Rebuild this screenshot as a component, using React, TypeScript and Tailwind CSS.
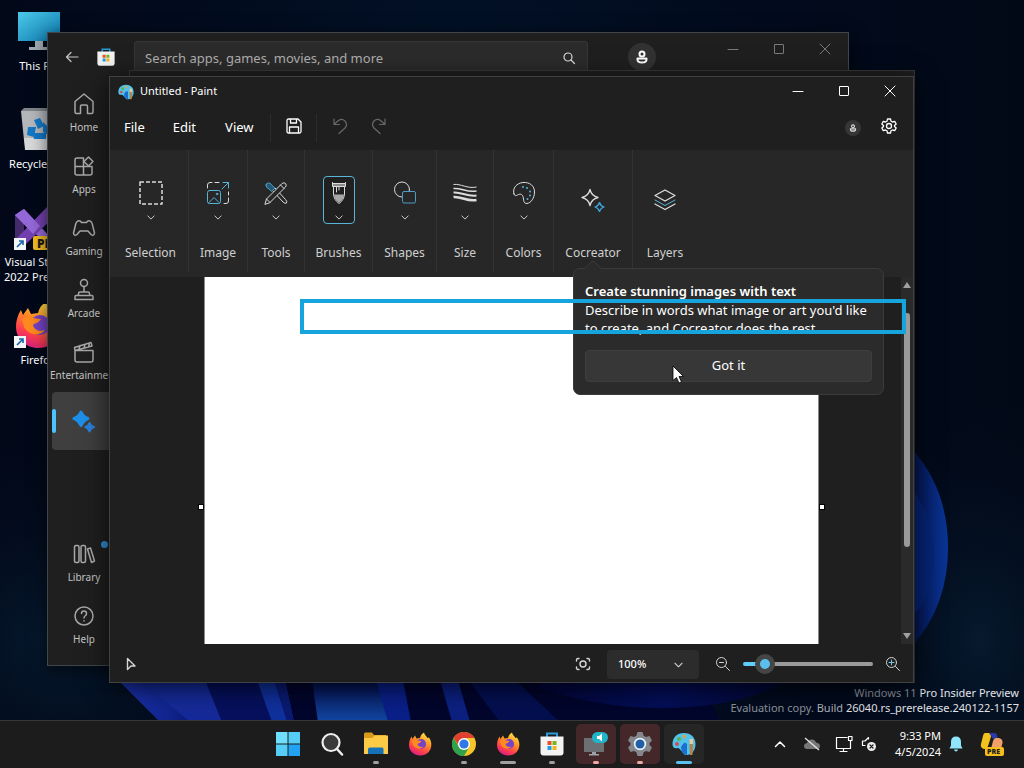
import React, { useState } from 'react';

type IconProps = { className?: string };

const stroke = {
  fill: 'none',
  stroke: 'currentColor',
  strokeLinecap: 'round' as const,
  strokeLinejoin: 'round' as const,
};

/* ---------- wallpaper ---------- */

function Wallpaper() {
  return (
    <svg className="absolute inset-0 h-full w-full" viewBox="0 0 1024 768" preserveAspectRatio="none" aria-hidden="true">
      <defs>
        <linearGradient id="sky" x1="0" y1="0" x2="1" y2="0">
          <stop offset="0" stopColor="#020818" />
          <stop offset="0.45" stopColor="#021026" />
          <stop offset="0.8" stopColor="#020a1c" />
          <stop offset="1" stopColor="#020916" />
        </linearGradient>
        <radialGradient id="glow">
          <stop offset="0" stopColor="#06192e" />
          <stop offset="1" stopColor="#020818" stopOpacity="0" />
        </radialGradient>
        <linearGradient id="petalA" x1="0" y1="0" x2="1" y2="0">
          <stop offset="0" stopColor="#1c33b0" />
          <stop offset="0.5" stopColor="#10248c" />
          <stop offset="1" stopColor="#020a4a" />
        </linearGradient>
        <linearGradient id="petalB" x1="0" y1="0" x2="0" y2="1">
          <stop offset="0" stopColor="#030c48" />
          <stop offset="1" stopColor="#1248a4" />
        </linearGradient>
        <linearGradient id="petalC" x1="0" y1="0" x2="1" y2="0">
          <stop offset="0" stopColor="#041450" />
          <stop offset="1" stopColor="#0a3698" />
        </linearGradient>
        <linearGradient id="petalD" x1="0" y1="0" x2="1" y2="0">
          <stop offset="0" stopColor="#02073a" />
          <stop offset="0.5" stopColor="#040e58" />
          <stop offset="1" stopColor="#020830" />
        </linearGradient>
      </defs>
      <rect width="1024" height="768" fill="url(#sky)" />
      <ellipse cx="60" cy="640" rx="260" ry="220" fill="url(#glow)" />
      <ellipse cx="980" cy="640" rx="180" ry="260" fill="url(#glow)" />
      <path d="M120 680 L160 722 H720 L700 680Z" fill="#02052c" />
      <path d="M118 680 L160 722 H225 L205 680Z" fill="url(#petalA)" />
      <path d="M135 680 Q165 700 190 722 H240 L205 680Z" fill="#152a98" />
      <path d="M205 680 H260 L272 722 H222Z" fill="#06105c" />
      <path d="M257 680 L272 722 H294 L285 680Z" fill="#10309c" />
      <path d="M274 680 L287 722 H294 L285 680Z" fill="#0a1a72" />
      <path d="M312 680 H378 L392 722 H318Z" fill="url(#petalB)" />
      <path d="M376 680 L388 722 H411 L403 680Z" fill="#0a1f88" />
      <path d="M440 680 L452 722 H470 L458 680Z" fill="#0c2080" />
      <path d="M468 680 H515 L560 722 H500Z" fill="#040f50" />
      <path d="M540 680 H790 Q740 708 660 708 Q600 708 540 688Z" fill="url(#petalD)" />
      <path d="M913 450 Q948 490 948 548 Q948 605 913 645Z" fill="url(#petalC)" />
      <path d="M913 490 Q934 520 934 555 Q934 595 913 615Z" fill="#062474" />
    </svg>
  );
}

/* ---------- desktop icons ---------- */

function ShortcutBadge() {
  return (
    <g>
      <rect x="0" y="32" width="12" height="12" fill="#f4f6f8" />
      <path d="M3 41 L9 35 M5 35 H9 V39" stroke="#1764a8" strokeWidth="1.6" fill="none" />
    </g>
  );
}

function ThisPcIcon() {
  return (
    <svg viewBox="0 0 48 48" className="h-12 w-12" aria-hidden="true">
      <defs>
        <linearGradient id="pc" x1="0" y1="0" x2="1" y2="1">
          <stop offset="0" stopColor="#4cc9ea" />
          <stop offset="1" stopColor="#0c77ac" />
        </linearGradient>
      </defs>
      <rect x="4" y="2" width="42" height="29" fill="url(#pc)" />
      <path d="M21 31 H29 V37 H35 V40 H15 V37 H21Z" fill="#a3acb3" />
    </svg>
  );
}

function RecycleIcon() {
  return (
    <svg viewBox="0 0 48 48" className="h-12 w-12" aria-hidden="true">
      <path d="M7 3 H43 L39 42 H11Z" fill="#b4b8bb" />
      <path d="M7 3 L10 0 H40 L43 3Z" fill="#7f8589" />
      <path d="M11 38 L10 30 L40 30 L39 42 H11Z" fill="#d6d8da" />
      <g fill="#1378c8">
        <path d="M20 12 L26 10 L30 18 L24 21Z" />
        <path d="M14 19 L22 19 L20 29 L13 27Z" />
        <path d="M19 25 H32 V31 H20Z" />
        <path d="M29 14 L36 21 L34 27 L29 24Z" />
      </g>
    </svg>
  );
}

function VisualStudioIcon() {
  return (
    <svg viewBox="0 0 48 48" className="h-12 w-12" aria-hidden="true">
      <path d="M1 9 L10 3 V40 L1 34Z" fill="#44296b" />
      <path d="M1 9 L10 3 L38 33 V43Z" fill="#9468d8" />
      <path d="M10 40 L1 34 L34 0 L46 5Z" fill="#7340b0" />
      <path d="M1 9 L10 3 L26 20 L19 28Z" fill="#9468d8" />
      <path d="M34 0 L46 5 V37 L34 43Z" fill="#b98cf0" />
      <rect x="19" y="30" width="29" height="14" rx="2" fill="#f2bd23" />
      <text x="23" y="42" fontSize="12" fontWeight="800" fontFamily="Open Sans, sans-serif" fill="#1a1a1a">PRE</text>
      <ShortcutBadge />
    </svg>
  );
}

function FirefoxArt({ id }: { id: string }) {
  return (
    <g>
      <defs>
        <linearGradient id={id} x1="0.8" y1="0" x2="0.3" y2="1">
          <stop offset="0" stopColor="#fff04a" />
          <stop offset="0.4" stopColor="#ff9422" />
          <stop offset="0.75" stopColor="#ff3d50" />
          <stop offset="1" stopColor="#d21d84" />
        </linearGradient>
      </defs>
      <path
        d="M1 13 C1 9 2.500 6 3.500 4.500 L4.500 7 L7 3.500 L8.500 6.500 L12 6 C12.500 4 13.500 2 16 0.500 C16.500 3 18.500 4 19.500 6 L21 5.500 C23.500 9 24 13 22.500 17 C20.500 21.500 16.500 23.500 12 23.500 C6 23.500 1 19 1 13Z"
        fill={`url(#${id})`}
      />
      <circle cx="13" cy="12" r="5" fill="#7542c8" />
      <path d="M4 9 C7 7 10 9 13.500 9 C12.500 11 10.500 11 9.500 12 C10 14.500 13 15.500 15.500 14.500 C13 18 7 17 5 13Z" fill="#ff8a20" />
    </g>
  );
}

function FirefoxDesktopIcon() {
  return (
    <svg viewBox="0 0 48 48" className="h-12 w-12" aria-hidden="true">
      <g transform="translate(0 -3) scale(2)">
        <FirefoxArt id="ffDesk" />
      </g>
      <ShortcutBadge />
    </svg>
  );
}

const desktopItems = [
  { label: 'This PC', icon: <ThisPcIcon /> },
  { label: 'Recycle Bin', icon: <RecycleIcon /> },
  { label: 'Visual Studio 2022 Preview', icon: <VisualStudioIcon /> },
  { label: 'Firefox', icon: <FirefoxDesktopIcon /> },
];

function DesktopIcons() {
  return (
    <div className="relative flex w-[76px] flex-col pt-[10px]">
      {desktopItems.map((item) => (
        <button key={item.label} className="flex h-[98px] flex-col items-center text-center text-[11px] leading-[15px] text-white">
          {item.icon}
          <span className="w-[76px]">{item.label}</span>
        </button>
      ))}
    </div>
  );
}

/* ---------- window buttons ---------- */

function WindowButtons({ className }: { className: string }) {
  return (
    <div className={`flex ${className}`}>
      <button aria-label="Minimize" className="flex h-full w-[46px] items-center justify-center">
        <svg viewBox="0 0 12 12" className="h-3 w-3" {...stroke}><path d="M1 6.500 H11" /></svg>
      </button>
      <button aria-label="Maximize" className="flex h-full w-[46px] items-center justify-center">
        <svg viewBox="0 0 12 12" className="h-3 w-3" {...stroke}><rect x="1.500" y="1.500" width="9" height="9" rx="0.500" /></svg>
      </button>
      <button aria-label="Close" className="flex h-full w-[46px] items-center justify-center">
        <svg viewBox="0 0 12 12" className="h-3 w-3" {...stroke}><path d="M1 1 L11 11 M11 1 L1 11" /></svg>
      </button>
    </div>
  );
}

function PersonIcon({ className }: IconProps) {
  return (
    <svg viewBox="0 0 14 14" className={className} {...stroke} strokeWidth="2" aria-hidden="true">
      <circle cx="7" cy="4" r="2.500" />
      <path d="M2.500 8.500 H11.500 V9.500 C11.500 11.500 9.500 12.500 7 12.500 C4.500 12.500 2.500 11.500 2.500 9.500Z" />
    </svg>
  );
}

/* ---------- Microsoft Store ---------- */

function StoreLogo({ className }: IconProps) {
  return (
    <svg viewBox="0 0 24 24" className={className} aria-hidden="true">
      <path d="M7 6 V1.500 H17 V6" fill="none" stroke="#2a9bd8" strokeWidth="2" />
      <path d="M0.500 4.500 H23.500 V20.500 Q23.500 23.500 20.500 23.500 H3.500 Q0.500 23.500 0.500 20.500Z" fill="#f3f3f3" />
      <rect x="7.500" y="9" width="4" height="4" fill="#e8502a" />
      <rect x="12.500" y="9" width="4" height="4" fill="#7ab51d" />
      <rect x="7.500" y="14" width="4" height="4" fill="#1f9de0" />
      <rect x="12.500" y="14" width="4" height="4" fill="#f6b51a" />
    </svg>
  );
}

const storeIcons: Record<string, React.ReactNode> = {
  Home: <path d="M3 9.500 L12 2 L21 9.500 V20 Q21 21.500 19.500 21.500 H15.500 V14.500 Q15.500 13 14 13 H10 Q8.500 13 8.500 14.500 V21.500 H4.500 Q3 21.500 3 20Z" />,
  Apps: (
    <>
      <path d="M11.500 4 H5 Q3 4 3 6 V19 Q3 21 5 21 H18 Q20 21 20 19 V12.500 H3 M11.500 4 V21" />
      <path d="M16.500 3 L21 7.500 L16.500 12 L12 7.500Z" />
    </>
  ),
  Gaming: <path d="M6 5 Q8 4 9.500 6.500 H14.500 Q16 4 18 5 Q20 5.500 21 11 L22.500 17 Q22 20.500 19 18.500 L16 15 H8 L5 18.500 Q2 20.500 1.500 17 L3 11 Q4 5.500 6 5Z" />,
  Arcade: (
    <>
      <circle cx="12" cy="5" r="3.500" />
      <path d="M12 8.500 V14 M6.500 17.500 V15.500 Q6.500 14 8 14 H16 Q17.500 14 17.500 15.500 V17.500 M4 17.500 H20 Q21 17.500 21 19 V21.500 H3 V19 Q3 17.500 4 17.500Z" />
    </>
  ),
  Entertainment: <path d="M3 10.500 H21 V20 Q21 22 19 22 H5 Q3 22 3 20Z M3 10.500 L2.500 7.500 L19 2.500 L20 6 L3 10.500 M8 5.500 L7 9 M13 4.500 L12 8 M17.500 3 L16.500 7" />,
  Library: (
    <>
      <rect x="2.500" y="3.500" width="4.500" height="17" rx="1.500" />
      <rect x="9" y="3.500" width="4.500" height="17" rx="1.500" />
      <path d="M15.500 7 L18.500 6 L22.500 19 L19.500 20.500Z" />
    </>
  ),
  Help: (
    <>
      <circle cx="12" cy="12" r="9" />
      <path d="M9.500 9.500 Q9.500 7 12 7 Q14.500 7 14.500 9.500 Q14.500 11 13.500 11.500 Q12 12.500 12 14 M12 16.800 V17" />
    </>
  ),
};

function StoreNavItem({ name, dot }: { name: string; dot?: boolean }) {
  return (
    <button className="relative flex h-[62px] w-[72px] flex-col items-center gap-1 pt-[6px] text-[10px] leading-[14px] text-[#c4c4c4]">
      <svg viewBox="0 0 24 24" className="h-6 w-6 text-[#a8a8a8]" {...stroke} strokeWidth="1.500" aria-hidden="true">
        {storeIcons[name]}
      </svg>
      <span>{name}</span>
      {dot && <span className="absolute top-[5px] right-[12px] h-[7px] w-[7px] rounded-full bg-[#2f8fd8]" />}
    </button>
  );
}

function StoreWindow() {
  return (
    <section aria-label="Microsoft Store" className="absolute top-8 right-[175px] bottom-[54px] left-[47px] flex flex-col overflow-hidden border border-[#41464b] bg-[#1f1f1f] shadow-[0_4px_16px_rgba(0,0,0,0.6)]">
      <header className="flex h-[53px] items-start">
        <div className="flex h-12 w-[86px] shrink-0 items-center justify-between pr-[19px] pl-[17px]">
          <button aria-label="Back" className="text-[#c8c8c8]">
            <svg viewBox="0 0 14 14" className="h-[14px] w-[14px]" {...stroke} strokeWidth="1.200"><path d="M13 7 H1.500 M6 2.500 L1.500 7 L6 11.500" /></svg>
          </button>
          <StoreLogo className="h-[18px] w-[18px]" />
        </div>
        <div className="relative mt-2 min-w-0 flex-1">
          <input
            type="text"
            aria-label="Search the Store"
            placeholder="Search apps, games, movies, and more"
            className="h-[34px] w-full rounded-[3px] border border-[#363636] bg-[#2b2b2b] pr-9 pl-[10px] text-[13px] text-white placeholder:text-[#b0b0b0]"
          />
          <svg viewBox="0 0 14 14" className="absolute top-[10px] right-3 h-[14px] w-[14px] text-[#dadada]" {...stroke} strokeWidth="1.200">
            <circle cx="6" cy="6" r="4" /><path d="M9 9 L12.500 12.500" />
          </svg>
        </div>
        <button aria-label="Account" className="mt-[10px] ml-10 flex h-7 w-7 items-center justify-center rounded-full bg-[#323232] text-white">
          <PersonIcon className="h-[14px] w-[14px]" />
        </button>
        <WindowButtons className="ml-[54px] h-8 text-[#7a7a7a]" />
      </header>
      <nav className="flex flex-1 flex-col pb-[5px]">
        {['Home', 'Apps', 'Gaming', 'Arcade', 'Entertainment'].map((name) => (
          <StoreNavItem key={name} name={name} />
        ))}
        <button aria-label="AI Hub" className="mt-[-4px] ml-1 flex h-[58px] w-16 items-center rounded-[4px] bg-[#3f3f3f]">
          <span className="h-6 w-1 rounded-full bg-[#4cc2ff]" />
          <svg viewBox="0 0 24 24" className="ml-4 h-6 w-6" aria-hidden="true">
            <path d="M9 3 Q11 7.500 16 9.500 Q11 11.500 9 16.500 Q7 11.500 2 9.500 Q7 7.500 9 3Z" fill="#1e8fe8" stroke="#1e8fe8" strokeWidth="3" strokeLinejoin="round" />
            <path d="M17.500 14 Q18.500 17 22 18 Q18.500 19 17.500 22.500 Q16.500 19 13.500 18 Q16.500 17 17.500 14Z" fill="#2880dc" stroke="#2880dc" strokeWidth="2" strokeLinejoin="round" />
          </svg>
        </button>
        <div className="mt-auto flex flex-col">
          <StoreNavItem name="Library" dot />
          <StoreNavItem name="Help" />
        </div>
      </nav>
    </section>
  );
}

/* ---------- Paint ---------- */

function PaintLogo({ className }: IconProps) {
  return (
    <svg viewBox="0 0 24 24" className={className} aria-hidden="true">
      <path d="M12 1 C19 1 23.500 5.500 23.500 12 C23.500 19 19 23 15 23 C11.500 23 11.500 21 9.500 19 C8 17.500 7.500 16 5.500 16 C2 17 0.500 15 0.500 12 C0.500 5.500 5 1 12 1Z" fill="#4fc3ea" />
      <path d="M11 12 L13 10.500 L15 12 V23 Q11.500 22.500 10 19.500 Q9 17 9 15Z" fill="#1b6fd0" />
      <circle cx="5" cy="12" r="2" fill="#d9475a" />
      <circle cx="7" cy="7" r="2" fill="#5fae4a" />
      <circle cx="12.500" cy="4.500" r="2" fill="#c9a860" />
      <path d="M17.500 8 H21 V16 L20.500 23 H18 L17.500 16Z" fill="#b5804c" />
      <path d="M17.500 7 H21 V12 H17.500Z" fill="#e8c9a0" />
    </svg>
  );
}

function Divider() {
  return <span className="h-7 w-px bg-[#2c2c2c]" />;
}

const ribbonIcons: Record<string, React.ReactNode> = {
  Selection: <rect x="1" y="1" width="22" height="22" strokeDasharray="4 2" strokeLinecap="butt" strokeWidth="1.500" />,
  Image: (
    <>
      <path d="M1.500 7 V4 Q1.500 1.500 4 1.500 H6 M9 1.500 H13 M22.500 11 V14 M22.500 17 V20 Q22.500 22.500 20 22.500 H18" />
      <g stroke="#58b4d8">
        <path d="M16 8 L22.500 1.500 M17 1.500 H22.500 V7" />
        <rect x="1.500" y="9.500" width="13" height="13" rx="2" />
        <path d="M3 21.500 L8 16.500 L13 21.500" />
        <circle cx="11" cy="13" r="0.800" />
      </g>
    </>
  ),
  Tools: (
    <>
      <path d="M8 9 L19 21 Q21 23 22.500 22 Q23.500 20.500 21.500 18.500 L11 7" />
      <path d="M1 23 L2.500 18 L18 2.500 Q20 1 21.500 2.500 Q23 4 21.500 6 L6 21.500Z" fill="#272727" />
      <path d="M16.500 4 L20 7.500 M2.500 18 L6 21.500" />
      <path d="M2 4 Q2 2 4.500 2 Q7 2 8 4.500 L11 7 L7.500 10.500 L5 8 Q2 7 2 4Z" stroke="#4d9cc4" fill="#245a78" />
    </>
  ),
  Brushes: (
    <>
      <path d="M6.500 6 V13 Q7 19 12 22.500 Q17 19 17.500 13 V6" />
      <path d="M5.500 1.500 V5.500 H18.500 V1.500 M5.500 2.500 H18.500" />
      <path d="M6 3 H18 V5 H6Z" fill="#8c8c8c" stroke="none" />
      <path d="M7 13.500 H17 Q16.500 18.500 12 21.500 Q7.500 18.500 7 13.500Z" fill="#a8a8a8" stroke="none" />
      <path d="M9.500 6 V11 M12 6 V9" />
    </>
  ),
  Shapes: (
    <>
      <circle cx="9" cy="8.500" r="7.500" />
      <rect x="9.500" y="10.500" width="13" height="11.500" rx="1.500" fill="#272727" stroke="#4d9cc4" />
    </>
  ),
  Size: (
    <g fill="none" strokeLinecap="butt">
      <path d="M0.500 3.500 C8 2.500 14 8 23.500 6" strokeWidth="1" />
      <path d="M0.500 7.500 C8 6.500 14 12 23.500 10" strokeWidth="1.500" />
      <path d="M0.500 11.500 C8 10.500 14 16 23.500 14.500" strokeWidth="2" />
      <path d="M0.500 16 C8 15 14 21 23.500 19" strokeWidth="2.500" />
    </g>
  ),
  Colors: (
    <>
      <path d="M2 13 C0 7 5 2 11 1.500 C18 1 22.500 5 22.500 11 C22.500 17 19 22 15 22.500 C11 22.500 12 19 11 15.500 C10 13 8 12.500 5.500 14 C4 15 2.500 15 2 13Z" />
      <g fill="#58b4d8" stroke="none">
        <circle cx="11" cy="6" r="1" /><circle cx="15" cy="7" r="1" /><circle cx="18" cy="10.500" r="1" />
        <circle cx="18" cy="14.500" r="1" /><circle cx="15.500" cy="18" r="1" />
      </g>
    </>
  ),
  Cocreator: (
    <>
      <path d="M9 1.500 Q10.500 8 17 9.500 Q10.500 11 9 17.500 Q7.500 11 1 9.500 Q7.500 8 9 1.500Z" strokeWidth="1.300" />
      <path d="M18.500 14.500 Q19.500 18 23 19 Q19.500 20 18.500 23.500 Q17.500 20 14 19 Q17.500 18 18.500 14.500Z" stroke="#3fa4dc" strokeWidth="1.300" />
    </>
  ),
  Layers: (
    <>
      <path d="M12 2 L22 7.500 L12 13 L2 7.500Z" strokeWidth="1.300" />
      <path d="M2 12 L12 17.500 L22 12" stroke="#58b4d8" />
      <path d="M2 16 L12 21.500 L22 16" strokeWidth="1.300" />
    </>
  ),
};

function Chevron({ className }: IconProps) {
  return (
    <svg viewBox="0 0 10 6" className={className} {...stroke} strokeWidth="1.200" aria-hidden="true"><path d="M1 1 L5 5 L9 1" /></svg>
  );
}

const ribbonGroups = [
  { name: 'Selection', width: 'w-[79px] pl-[3px]', menu: true },
  { name: 'Image', width: 'w-[59px]', menu: true },
  { name: 'Tools', width: 'w-[57px]', menu: true },
  { name: 'Brushes', width: 'w-[68px]', menu: true, active: true },
  { name: 'Shapes', width: 'w-[64px]', menu: true },
  { name: 'Size', width: 'w-[57px]', menu: true },
  { name: 'Colors', width: 'w-[60px]', menu: true },
  { name: 'Cocreator', width: 'w-[79px]' },
  { name: 'Layers', width: 'w-16', last: true },
];

function Ribbon() {
  return (
    <div className="flex h-[127px] shrink-0 bg-[#272727]">
      {ribbonGroups.map((g) => (
        <button
          key={g.name}
          className={`flex h-[122px] shrink-0 flex-col items-center pt-[26px] text-[12px] leading-4 text-[#cfcfcf] ${g.width} ${g.last ? '' : 'border-r border-[#323232]'}`}
        >
          <span className={`flex h-12 w-8 flex-col items-center justify-center gap-[10px] rounded-[4px] ${g.active ? 'border border-[#58b4d8] bg-[#202020]' : ''}`}>
            <svg viewBox="0 0 24 24" className="h-6 w-6 shrink-0 text-[#dcdcdc]" {...stroke} aria-hidden="true">{ribbonIcons[g.name]}</svg>
            {g.menu && <Chevron className="h-[5px] w-2 text-[#d0d0d0]" />}
          </span>
          <span className="mt-[21px]">{g.name}</span>
        </button>
      ))}
    </div>
  );
}

function CocreatorTip({ onClose }: { onClose: () => void }) {
  return (
    <div role="dialog" aria-label="Create stunning images with text" className="absolute top-[191px] left-[463px] w-[311px] rounded-[7px] border border-[#3b3b3b] bg-[#2b2b2b] px-[11px] py-3 text-white">
      <svg viewBox="0 0 18 9" className="absolute top-[-8px] left-[10px] h-[9px] w-[18px]" aria-hidden="true">
        <path d="M0 8 L8 0.500 H10 L18 8 V9 H0Z" fill="#2b2b2b" />
        <path d="M0 8 L8 0.500 H10 L18 8" fill="none" stroke="#3b3b3b" />
      </svg>
      <h2 className="text-[13px] leading-5 font-semibold">Create stunning images with text</h2>
      <p className="h-[49px] text-[13px] leading-[18px]">Describe in words what image or art you'd like to create, and Cocreator does the rest.</p>
      <button onClick={onClose} className="h-8 w-full rounded-[4px] border border-[#3e3e3e] bg-[#373737] text-[13px]">Got it</button>
    </div>
  );
}

function Handle({ className }: { className: string }) {
  return <span className={`absolute top-[227px] h-[6px] w-[6px] border border-black bg-white ${className}`} />;
}

function CanvasArea() {
  return (
    <div className="flex min-h-0 flex-1">
      <div className="relative w-[94px] shrink-0"><Handle className="right-0" /></div>
      <div className="flex-1 border-x border-[#8a8a8a] bg-white" />
      <div className="relative flex w-[94px] shrink-0 justify-end">
        <Handle className="left-0" />
        <div className="flex w-3 flex-col items-center justify-between bg-[#2a2a2a] py-[5px]">
          <svg viewBox="0 0 8 6" className="h-[6px] w-2" aria-hidden="true"><path d="M4 0 L8 6 H0Z" fill="#a0a0a0" /></svg>
          <span className="mt-[25px] mb-auto h-[234px] w-[6px] rounded-full bg-[#9a9a9a]" />
          <svg viewBox="0 0 8 6" className="h-[6px] w-2" aria-hidden="true"><path d="M0 0 H8 L4 6Z" fill="#a0a0a0" /></svg>
        </div>
      </div>
    </div>
  );
}

function StatusBar() {
  const [zoom, setZoom] = useState(11);

  return (
    <footer className="flex h-[38px] shrink-0 items-center pt-[2px] text-[#d6d6d6]">
      <svg viewBox="0 0 10 14" className="ml-4 h-[14px] w-[10px]" {...stroke} strokeWidth="1.400" aria-hidden="true"><path d="M1.500 1.500 L9 9 H5 L1.500 12.500Z" /></svg>
      <button aria-label="Fit to window" className="mr-4 ml-auto">
        <svg viewBox="0 0 16 16" className="h-4 w-4" {...stroke} strokeWidth="1.400">
          <circle cx="8" cy="8" r="3" />
          <path d="M1.500 5 V4 Q1.500 2.500 3 2.500 H4 M12 2.500 H13 Q14.500 2.500 14.500 4 V5 M14.500 11 V12 Q14.500 13.500 13 13.500 H12 M4 13.500 H3 Q1.500 13.500 1.500 12 V11" />
        </svg>
      </button>
      <div className="relative">
        <select aria-label="Zoom level" defaultValue="100%" className="block h-[29px] w-[92px] appearance-none rounded-[4px] bg-[#2c2c2c] pl-[11px] text-[11px] font-medium text-white">
          <option>50%</option>
          <option>100%</option>
          <option>200%</option>
        </select>
        <Chevron className="pointer-events-none absolute top-3 right-4 h-[6px] w-[9px]" />
      </div>
      <button aria-label="Zoom out" className="ml-4">
        <svg viewBox="0 0 16 16" className="h-4 w-4" {...stroke}><circle cx="6.500" cy="6.500" r="5" /><path d="M10.500 10.500 L14.500 14.500 M4.500 6.500 H8.500" /></svg>
      </button>
      <input
        type="range"
        aria-label="Zoom"
        min="0"
        max="100"
        value={zoom}
        onChange={(e) => setZoom(Number(e.target.value))}
        className="mx-3 h-5 w-[130px] appearance-none bg-transparent [&::-webkit-slider-runnable-track]:h-1 [&::-webkit-slider-runnable-track]:rounded-full [&::-webkit-slider-runnable-track]:bg-[linear-gradient(90deg,#60cdff_16%,#9a9a9a_16%)] [&::-webkit-slider-thumb]:mt-[-8px] [&::-webkit-slider-thumb]:h-5 [&::-webkit-slider-thumb]:w-5 [&::-webkit-slider-thumb]:appearance-none [&::-webkit-slider-thumb]:rounded-full [&::-webkit-slider-thumb]:border-[5px] [&::-webkit-slider-thumb]:border-[#454545] [&::-webkit-slider-thumb]:bg-[#5bbfee]"
      />
      <button aria-label="Zoom in" className="mr-3">
        <svg viewBox="0 0 16 16" className="h-4 w-4" {...stroke}><circle cx="6.500" cy="6.500" r="5" /><path d="M10.500 10.500 L14.500 14.500" /><path d="M4 6.500 H9 M6.500 4 V9" stroke="#78c8e8" /></svg>
      </button>
    </footer>
  );
}

function PaintWindow() {
  const [tipOpen, setTipOpen] = useState(true);

  return (
    <section aria-label="Paint" className="absolute top-[76px] right-[110px] bottom-[37px] left-[109px] flex flex-col border border-[#414141] bg-[#1f1f1f] shadow-[0_4px_24px_rgba(0,0,0,0.7)]">
      <header className="flex h-[29px] shrink-0 items-center">
        <PaintLogo className="ml-2 h-4 w-4" />
        <h1 className="ml-[6px] text-[11px] text-white">Untitled - Paint</h1>
        <WindowButtons className="ml-auto h-7 self-start text-white" />
      </header>
      <div className="flex h-11 shrink-0 items-center text-[13px] text-white">
        <button className="ml-[14px]">File</button>
        <button className="ml-7">Edit</button>
        <button className="mr-4 ml-[29px]">View</button>
        <Divider />
        <button aria-label="Save" className="mr-[14px] ml-[15px] pb-1">
          <svg viewBox="0 0 16 16" className="h-4 w-4" {...stroke} strokeWidth="1.300">
            <path d="M1 2.500 Q1 1 2.500 1 H12 L15 4 V13.500 Q15 15 13.500 15 H2.500 Q1 15 1 13.500Z M4.500 1 V5 H10.500 V1 M3.500 15 V9 H12.500 V15" />
          </svg>
        </button>
        <Divider />
        <button aria-label="Undo" className="ml-[15px] pb-1 text-[#686868]">
          <svg viewBox="0 0 16 18" className="h-[18px] w-4" {...stroke} strokeWidth="1.200"><path d="M2 2 V7.500 H7.500 M2.500 7 L6.500 3.500 Q10 1 13 4 Q16 7.500 13 11 L7 16.500" /></svg>
        </button>
        <button aria-label="Redo" className="ml-[23px] pb-1 text-[#686868]">
          <svg viewBox="0 0 16 18" className="h-[18px] w-4" {...stroke} strokeWidth="1.200"><path d="M14 2 V7.500 H8.500 M13.500 7 L9.500 3.500 Q6 1 3 4 Q0 7.500 3 11 L9 16.500" /></svg>
        </button>
        <button aria-label="Account" className="mr-5 ml-auto flex h-4 w-4 items-center justify-center rounded-full bg-[#363636] text-[#dcdcdc]">
          <PersonIcon className="h-2 w-2" />
        </button>
        <button aria-label="Settings" className="mr-4 pb-1">
          <svg viewBox="0 0 16 16" className="h-4 w-4" {...stroke} strokeWidth="1.300">
            <circle cx="8" cy="8" r="2.500" />
            <path d="M6.500 1 H9.500 L10 3.200 L11.500 4 L13.700 3.400 L15.200 6 L13.500 7.500 V8.500 L15.200 10 L13.700 12.600 L11.500 12 L10 12.800 L9.500 15 H6.500 L6 12.800 L4.500 12 L2.300 12.600 L0.800 10 L2.500 8.500 V7.500 L0.800 6 L2.300 3.400 L4.500 4 L6 3.200Z" />
          </svg>
        </button>
      </div>
      <Ribbon />
      <CanvasArea />
      <StatusBar />
      {tipOpen && <CocreatorTip onClose={() => setTipOpen(false)} />}
      <div className="pointer-events-none absolute top-[222px] left-[190px] h-[35px] w-[606px] border-[4px] border-[#15a5dc]" />
      <svg viewBox="0 0 12 19" className="pointer-events-none absolute top-[288px] left-[562px] h-[19px] w-3" aria-hidden="true">
        <path d="M1 1 V15.500 L4.500 12.500 L7 18 L9.500 17 L7 11.500 H11.500Z" fill="#fff" stroke="#000" strokeWidth="0.800" />
      </svg>
    </section>
  );
}

/* ---------- taskbar ---------- */

const taskbarApps = [
  {
    name: 'Start',
    icon: (
      <g fill="#55cdf6">
        <rect x="0" y="0" width="11.500" height="11.500" fill="#6fe0fb" /><rect x="12.500" y="0" width="11.500" height="11.500" />
        <rect x="0" y="12.500" width="11.500" height="11.500" /><rect x="12.500" y="12.500" width="11.500" height="11.500" fill="#22a2f2" />
      </g>
    ),
  },
  {
    name: 'Search',
    icon: (
      <g>
        <circle cx="11" cy="10.500" r="8.500" fill="#3a3a3a" stroke="#eee" strokeWidth="2.200" />
        <path d="M17 17 L22 22.500" stroke="#eee" strokeWidth="2.500" strokeLinecap="round" />
      </g>
    ),
  },
  {
    name: 'File Explorer',
    mark: 'w-[6px] bg-[#a0a0a0]',
    icon: (
      <g>
        <path d="M0 2 Q0 0.500 1.500 0.500 H8 L10 3 H22 V8 H0Z" fill="#d99a1c" />
        <path d="M0 6 H8 L11 3.500 H24 V22 H0Z" fill="#fbcb45" />
        <path d="M4 22 V17 Q4 15.500 6 15.500 H18 Q19.500 15.500 19.500 17 V22Z" fill="#1672b8" />
      </g>
    ),
  },
  { name: 'Firefox', icon: <FirefoxArt id="ffOne" /> },
  {
    name: 'Chrome',
    mark: 'w-[6px] bg-[#a0a0a0]',
    icon: (
      <g>
        <circle cx="12" cy="12" r="12" fill="#f6c528" />
        <path d="M1.600 6 A12 12 0 0 1 22.400 6 H12 L7 14Z" fill="#e0402f" />
        <path d="M1.600 6 A12 12 0 0 0 12 24 L17.200 15 L12 18 L7 15Z" fill="#2ea24c" />
        <circle cx="12" cy="12" r="6" fill="#fff" />
        <circle cx="12" cy="12" r="4.600" fill="#2f78e8" />
      </g>
    ),
  },
  { name: 'Firefox Nightly', mark: 'w-4 bg-[#a0a0a0]', icon: <FirefoxArt id="ffTwo" /> },
  { name: 'Microsoft Store', mark: 'w-[6px] bg-[#a0a0a0]', icon: <StoreLogo /> },
  {
    name: 'Audio',
    tile: 'bg-[#432729]',
    mark: 'w-[6px] bg-[#f0a8a4]',
    icon: (
      <g>
        <rect x="0" y="6" width="20" height="14" fill="#6c7074" />
        <path d="M8 20 H12 V22 H15 V23.500 H5 V22 H8Z" fill="#9ba2aa" />
        <rect x="8" y="0" width="16" height="11" rx="5.500" fill="#1fb4c8" />
        <path d="M13 4 H15 L18 1.500 V9.500 L15 7 H13Z" fill="#fff" />
      </g>
    ),
  },
  {
    name: 'Settings',
    tile: 'bg-[#432729]',
    mark: 'w-[6px] bg-[#f0a8a4]',
    icon: (
      <g>
        <path d="M9.500 0 H14.500 L15.500 3.500 L18 5 L21.500 4 L24 8.500 L21.500 11 V13 L24 15.500 L21.500 20 L18 19 L15.500 20.500 L14.500 24 H9.500 L8.500 20.500 L6 19 L2.500 20 L0 15.500 L2.500 13 V11 L0 8.500 L2.500 4 L6 5 L8.500 3.500Z" fill="#82878c" />
        <circle cx="12" cy="12" r="6.200" fill="#eef2f6" />
        <circle cx="12" cy="12" r="4.500" fill="#1e5fa8" />
      </g>
    ),
  },
  { name: 'Paint', tile: 'bg-[#262626]', mark: 'w-4 bg-[#5bc0ee]', icon: <PaintLogo /> },
];

function Taskbar() {
  return (
    <footer className="relative flex h-12 shrink-0 items-center border-t border-[#36393c] bg-[#1c1c1c] pb-[2px] text-white">
      <div className="mr-[62px] ml-auto flex h-full items-center">
        {taskbarApps.map((app) => (
          <button key={app.name} aria-label={app.name} className="flex h-full w-11 items-center justify-center">
            <span className={`relative flex h-10 w-10 items-center justify-center rounded-[5px] ${app.tile ?? ''}`}>
              <svg viewBox="0 0 24 24" className="h-6 w-6">{app.icon}</svg>
              {app.mark && <span className={`absolute bottom-0 h-[3px] rounded-full ${app.mark}`} />}
            </span>
          </button>
        ))}
      </div>
      <div className="flex w-[256px] items-center">
        <button aria-label="Show hidden icons" className="ml-[2px] flex w-5 justify-center">
          <svg viewBox="0 0 12 8" className="h-2 w-3" {...stroke} strokeWidth="1.500"><path d="M1.500 6.500 L6 2 L10.500 6.500" /></svg>
        </button>
        <svg viewBox="0 0 18 16" className="ml-[13px] h-4 w-[18px]" aria-hidden="true">
          <path d="M4 13 Q1 13 1 10 Q1 7.500 4 7 Q5.500 3 9 3.500 Q12 3.500 13 6.500 Q17 7 17 10 Q17 13 14 13Z" fill="#777" />
          <path d="M2 2 L16 14" stroke="#e2e2e2" strokeWidth="1.400" />
        </svg>
        <button aria-label="Network and volume" className="ml-[14px] flex items-center gap-2">
          <svg viewBox="0 0 18 18" className="h-[18px] w-[18px]" {...stroke} strokeWidth="1.200">
            <path d="M12 2.500 H1.500 V13.500 H15.500 V8 M5 16.500 H12 M8.500 13.500 V16.500 M13.500 1.500 H17 V5.500 H13.500Z M15.500 5.500 V8" />
          </svg>
          <svg viewBox="0 0 16 16" className="h-4 w-4" {...stroke} strokeWidth="1.200">
            <path d="M7.500 3 V1.500 L4 5 H1.500 V9.500 H4" />
            <circle cx="10.500" cy="10.500" r="4.500" fill="#eee" stroke="none" />
            <path d="M9 9 L12 12 M12 9 L9 12" stroke="#1c1c1c" />
          </svg>
        </button>
        <button className="ml-auto text-right text-[11px] leading-4">
          <span className="block">9:33 PM</span>
          <span className="block">4/5/2024</span>
        </button>
        <button aria-label="Notifications" className="ml-2">
          <svg viewBox="0 0 14 16" className="h-4 w-[14px]" aria-hidden="true">
            <path d="M7 0.500 Q12 0.500 12 6 V9.500 L13.500 12.500 H0.500 L2 9.500 V6 Q2 0.500 7 0.500Z M5 13.500 H9 Q8.500 15.500 7 15.500 Q5.500 15.500 5 13.500Z" fill="#8fe6fa" />
          </svg>
        </button>
        <button aria-label="Copilot preview" className="mr-[19px] ml-4">
          <svg viewBox="0 0 26 24" className="h-6 w-[26px]">
            <path d="M6 1 H14 Q12 3 11 8 L9 14 Q8 17 5 17 Q1 16 2 12 L4 4 Q4.500 1 6 1Z" fill="#f4c21c" />
            <path d="M10 1 H16 Q18 1 18.500 6 L14 7Z" fill="#2a3aa8" />
            <path d="M17 6 H20 Q24 7 23.500 11 L22 17 H12 L14 9 Q15 6 17 6Z" fill="#f0a068" />
            <rect x="6" y="15" width="19" height="9" rx="2" fill="#f6bd1e" />
            <text x="8" y="22" fontSize="7" fontWeight="800" fontFamily="Open Sans, sans-serif" fill="#1c1c1c">PRE</text>
          </svg>
        </button>
      </div>
    </footer>
  );
}

export default function App() {
  return (
    <div className="relative flex min-h-screen flex-col overflow-hidden bg-[#020818] font-['Noto_Sans','Open_Sans',sans-serif]">
      <Wallpaper />
      <main className="relative flex-1">
        <DesktopIcons />
        <div className="absolute right-[5px] bottom-[5px] text-right text-[11px] leading-[15px] text-[#e2e4e8]">
          <p><span className="text-[#8c929c]">Windows 11</span> Pro Insider Preview</p>
          <p><span className="text-[#8c929c]">Evaluation copy.</span> <span className="text-[#acb2ba]">Build</span> 26040.rs_prerelease.240122-1157</p>
        </div>
        <StoreWindow />
        <div className="absolute top-[70px] right-[109px] bottom-[37px] left-[129px] border-x border-t border-[#383838] bg-[#1f1f1f]" />
        <PaintWindow />
      </main>
      <Taskbar />
    </div>
  );
}
